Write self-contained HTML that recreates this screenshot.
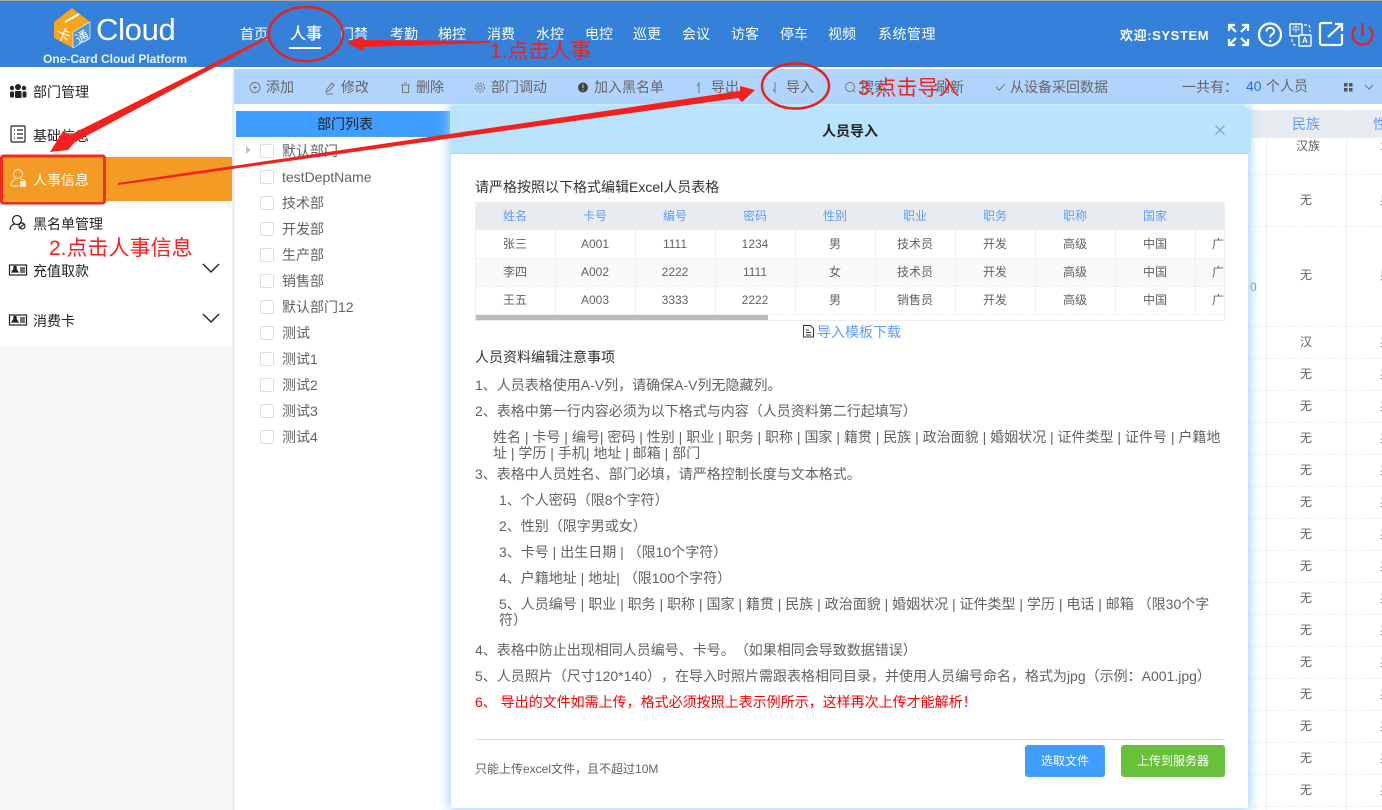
<!DOCTYPE html>
<html lang="zh"><head><meta charset="utf-8"><title>人员导入</title>
<style>
*{box-sizing:border-box}
html,body{margin:0;padding:0;width:1382px;height:810px;overflow:hidden;background:#fff;font-family:"Liberation Sans","Noto Sans CJK SC",sans-serif;font-size:14px;color:#606266;text-spacing-trim:space-all}
.a{position:absolute}
.t{position:absolute;white-space:nowrap;line-height:20px;height:20px}
.c{position:absolute;white-space:nowrap;line-height:20px;height:20px;transform:translateX(-50%)}
.n{color:#fff;top:24px}
.b{color:#666;top:77px}
.s{color:#222;}
.cb{position:absolute;left:260px;width:14px;height:14px;border:1px solid #dcdfe6;border-radius:2px;background:#fff}
.tr{left:282px;color:#606266}
.h{font-size:12px;color:#5c9eff;top:206px}
.r{font-size:12px;color:#606266}
.w{font-size:12px;color:#606266}
.v{position:absolute;width:1px;background:#ebeef5}
.d{position:absolute;height:0;border-top:1px dashed #ebeef5}
svg{position:absolute;overflow:visible}
</style></head><body>
<div class="a" style="left:0;top:0;width:1382px;height:1px;background:#aaa"></div>
<div class="a" style="left:0;top:1px;width:1382px;height:66px;background:#3580d8"></div>
<!-- sidebar -->
<div class="a" style="left:0;top:346px;width:232px;height:464px;background:#f7f7f7"></div>
<div class="a" style="left:232px;top:67px;width:3px;height:743px;background:#eef0f7"></div>
<div class="a" style="left:0;top:157px;width:232px;height:44px;background:#f39b25"></div>
<!-- logo -->
<svg style="left:0;top:0" width="200" height="67">
<polygon points="54,22 72,8 90,22 73,32" fill="#f9a51a"/>
<polygon points="54,22 73,32 73,48 54,38" fill="#f9a51a"/>
<polygon points="73,32 90,22 90,38 73,48" fill="#4c93e0" stroke="#fff" stroke-width=".6"/>
<line x1="65" y1="22" x2="79" y2="14" stroke="#fff" stroke-width="2"/>
<text x="56" y="40" font-size="15" fill="#fff" font-family="Noto Sans CJK SC" transform="rotate(22 63 34)">卡</text>
<text x="75" y="42" font-size="13" fill="#fff" font-family="Noto Sans CJK SC" transform="rotate(-28 81 36)">通</text>
</svg>
<div class="t" style="left:96px;top:10px;height:40px;line-height:40px;font-size:31px;color:#fff;letter-spacing:-.3px">Cloud</div>
<div class="t" style="left:43px;top:49px;font-size:12px;font-weight:bold;color:#e8f2ff">One-Card Cloud Platform</div>
<!-- nav -->
<div class="t n" style="left:240px">首页</div>
<div class="t" style="left:290px;top:25px;font-size:16px;color:#fff;-webkit-text-stroke:.3px #fff">人事</div>
<div class="a" style="left:289px;top:47px;width:32px;height:2px;background:#fff"></div>
<div class="t n" style="left:340px">门禁</div>
<div class="t n" style="left:390px">考勤</div>
<div class="t n" style="left:438px">梯控</div>
<div class="t n" style="left:487px">消费</div>
<div class="t n" style="left:536px">水控</div>
<div class="t n" style="left:585px">电控</div>
<div class="t n" style="left:633px">巡更</div>
<div class="t n" style="left:682px">会议</div>
<div class="t n" style="left:731px">访客</div>
<div class="t n" style="left:780px">停车</div>
<div class="t n" style="left:828px">视频</div>
<div class="t n" style="left:878px;letter-spacing:.5px">系统管理</div>
<div class="t" style="left:1120px;top:26px;font-size:13px;font-weight:bold;color:#fff;letter-spacing:.6px">欢迎:SYSTEM</div>
<!-- header icons -->
<svg style="left:0;top:0" width="1382" height="67" fill="none" stroke="#fff" stroke-width="2.2">
<path d="M1229 31v-6h6M1248 31v-6h-6M1229 39v6h6M1248 39v6h-6M1230 26l6 6M1247 26l-6 6M1230 44l6-6M1247 44l-6-6"/>
<circle cx="1270" cy="34.500" r="11"/>
<path d="M1266.500 31.500c0-5 7.500-5 7.500 0 0 3-3.800 2.800-3.800 6" stroke-width="2"/>
<circle cx="1270.200" cy="41" r=".6" stroke-width="1.400"/>
<rect x="1290" y="24" width="12" height="12" rx="1" stroke-width="1.400"/>
<rect x="1299" y="35" width="12" height="11" rx="1" stroke-width="1.400" fill="#3580d8"/>
<path d="M1304 25h5l1 3v4M1292 39v2l2 4h3" stroke-width="1.200" stroke-dasharray="3 2"/>
<path d="M1342 34v9a2 2 0 0 1-2 2h-18a2 2 0 0 1-2-2v-18a2 2 0 0 1 2-2h10"/>
<path d="M1328 37l14-13M1335 24h7v7"/>
<path d="M1356 27a10 10 0 1 0 13 0M1362.500 23v13" stroke="#e8231d" stroke-width="2.400"/>
</svg>
<div class="t" style="left:1296px;top:24px;width:10px;height:12px;line-height:11px;font-size:8px;color:#fff;transform:translateX(-4px)">中</div>
<div class="t" style="left:1302px;top:35px;height:11px;line-height:11px;font-size:8px;font-weight:bold;color:#fff">A</div>
<!-- sidebar items -->
<svg style="left:0;top:0" width="232" height="346" fill="none" stroke="#222" stroke-width="1.200">
<g fill="#222" stroke="none"><circle cx="18" cy="87" r="3"/><circle cx="12" cy="88" r="2.200"/><circle cx="24" cy="88" r="2.200"/><rect x="15" y="91" width="6.500" height="7" rx="1"/><rect x="10" y="91.500" width="4" height="6" rx="1"/><rect x="22.500" y="91.500" width="4" height="6" rx="1"/></g>
<rect x="11" y="126" width="14" height="16" rx="1"/><path d="M14 130h1M17 130h6M14 134h1M17 134h6M14 138h1M17 138h6"/>
<g stroke="#fbe4c4"><circle cx="18" cy="174" r="4.500"/><path d="M11 186c0-4 2-6 4-7M21 179c2 .5 3 1 4 2M11 186h8"/></g><rect x="20" y="181" width="6" height="6" fill="#fbe4c4" stroke="none"/>
<circle cx="17" cy="220" r="4.500"/><path d="M10 230c0-4 3-6 5-6"/><circle cx="22" cy="226" r="3"/><path d="M20 228l4-4"/>
<rect x="9.500" y="265" width="17" height="10" /><path d="M12 272l2-3h2l2 3z" fill="#222"/><circle cx="15" cy="267.500" r="1.200" fill="#222"/><path d="M20 268h5M20 270h5M20 272h5"/>
<rect x="9.500" y="315" width="17" height="10"/><path d="M12 322l2-3h2l2 3z" fill="#222"/><circle cx="15" cy="317.500" r="1.200" fill="#222"/><path d="M20 318h5M20 320h5M20 322h5"/>
<path d="M203 264l8 8 8-8M203 314l8 8 8-8" stroke-width="1.400"/>
</svg>
<div class="t s" style="left:33px;top:82px">部门管理</div>
<div class="t s" style="left:33px;top:126px">基础信息</div>
<div class="t" style="left:33px;top:170px;color:#fff">人事信息</div>
<div class="t s" style="left:33px;top:214px">黑名单管理</div>
<div class="t s" style="left:33px;top:261px">充值取款</div>
<div class="t s" style="left:33px;top:311px">消费卡</div>
<!-- toolbar -->
<div class="a" style="left:234px;top:69px;width:1148px;height:35px;background:#b1d4fd"></div>
<svg style="left:0;top:0" width="1382" height="110" fill="none" stroke="#777" stroke-width="1">
<circle cx="255" cy="87.500" r="5"/><path d="M253 87.500h4M255 85.500v4"/>
<path d="M326 92l1-3 5-6 2 2-5 6zM326 94h7"/>
<path d="M401 85h9M402.500 85v7.500h6V85M404 83h3"/>
<circle cx="480" cy="87.500" r="2"/><circle cx="480" cy="87.500" r="4.500" stroke-dasharray="2 1"/>
<circle cx="583" cy="87.500" r="5" fill="#444" stroke="none"/><path d="M583 84.500v3.500M583 89.500v1" stroke="#b1d4fd"/>
<path d="M699 93v-10l-2 3"/>
<path d="M775 82v10l-2-3"/>
<circle cx="850" cy="87" r="4.500"/><path d="M853 90l2 2"/>
<path d="M996 87l3 3 6-6"/>
<g fill="#555" stroke="none"><rect x="1344" y="83" width="3.500" height="3.500"/><rect x="1349" y="83" width="3.500" height="3.500"/><rect x="1344" y="88" width="3.500" height="3.500"/><rect x="1349" y="88" width="3.500" height="3.500"/></g>
<path d="M1365 85l4 4 4-4"/>
</svg>
<div class="t b" style="left:266px">添加</div>
<div class="t b" style="left:341px">修改</div>
<div class="t b" style="left:416px">删除</div>
<div class="t b" style="left:491px">部门调动</div>
<div class="t b" style="left:594px">加入黑名单</div>
<div class="t b" style="left:711px">导出</div>
<div class="t b" style="left:786px">导入</div>
<div class="t b" style="left:860px">搜索</div>
<div class="t b" style="left:936px">刷新</div>
<div class="t b" style="left:1010px">从设备采回数据</div>
<div class="t b" style="left:1182px">一共有：</div>
<div class="t" style="left:1246px;top:76px;color:#2b6cf0">40</div>
<div class="t b" style="left:1266px;top:76px">个人员</div>
<!-- tree -->
<div class="a" style="left:236px;top:111px;width:214px;height:26px;background:#409eff"></div>
<div class="c" style="left:345px;top:114px;font-size:14px;color:#222">部门列表</div>
<svg style="left:0;top:0" width="260" height="160"><polygon points="246,146 251,150 246,154" fill="#c0c4cc"/></svg>
<div class="cb" style="top:144px"></div><div class="t tr" style="top:141px">默认部门</div>
<div class="cb" style="top:170px"></div><div class="t tr" style="top:167px">testDeptName</div>
<div class="cb" style="top:196px"></div><div class="t tr" style="top:193px">技术部</div>
<div class="cb" style="top:222px"></div><div class="t tr" style="top:219px">开发部</div>
<div class="cb" style="top:248px"></div><div class="t tr" style="top:245px">生产部</div>
<div class="cb" style="top:274px"></div><div class="t tr" style="top:271px">销售部</div>
<div class="cb" style="top:300px"></div><div class="t tr" style="top:297px">默认部门12</div>
<div class="cb" style="top:326px"></div><div class="t tr" style="top:323px">测试</div>
<div class="cb" style="top:352px"></div><div class="t tr" style="top:349px">测试1</div>
<div class="cb" style="top:378px"></div><div class="t tr" style="top:375px">测试2</div>
<div class="cb" style="top:404px"></div><div class="t tr" style="top:401px">测试3</div>
<div class="cb" style="top:430px"></div><div class="t tr" style="top:427px">测试4</div>
<!-- right table behind -->
<div class="a" style="left:1240px;top:110px;width:142px;height:28px;background:#e8ebf0"></div>
<div class="v" style="left:1266px;top:110px;height:700px"></div>
<div class="v" style="left:1346px;top:110px;height:700px"></div>
<div class="c" style="left:1306px;top:114px;color:#5c9eff">民族</div>
<div class="t" style="left:1373px;top:114px;color:#5c9eff">性别</div>
<div class="c w" style="left:1308px;top:136px">汉族</div><div class="t w" style="left:1380px;top:136px;color:#f56c6c">1</div>
<div class="d" style="left:1248px;top:174px;width:134px"></div>
<div class="d" style="left:1248px;top:226px;width:134px"></div>
<div class="d" style="left:1248px;top:326px;width:134px"></div>
<div class="d" style="left:1248px;top:358px;width:134px"></div>
<div class="d" style="left:1248px;top:390px;width:134px"></div>
<div class="d" style="left:1248px;top:422px;width:134px"></div>
<div class="d" style="left:1248px;top:454px;width:134px"></div>
<div class="d" style="left:1248px;top:486px;width:134px"></div>
<div class="d" style="left:1248px;top:518px;width:134px"></div>
<div class="d" style="left:1248px;top:550px;width:134px"></div>
<div class="d" style="left:1248px;top:582px;width:134px"></div>
<div class="d" style="left:1248px;top:614px;width:134px"></div>
<div class="d" style="left:1248px;top:646px;width:134px"></div>
<div class="d" style="left:1248px;top:678px;width:134px"></div>
<div class="d" style="left:1248px;top:710px;width:134px"></div>
<div class="d" style="left:1248px;top:742px;width:134px"></div>
<div class="d" style="left:1248px;top:774px;width:134px"></div>
<div class="d" style="left:1248px;top:806px;width:134px"></div>
<div class="c w" style="left:1306px;top:190px">无</div><div class="t w" style="left:1380px;top:190px">男</div>
<div class="c w" style="left:1306px;top:265px">无</div><div class="t w" style="left:1380px;top:265px">男</div>
<div class="c w" style="left:1306px;top:332px">汉</div><div class="t w" style="left:1380px;top:332px">男</div>
<div class="c w" style="left:1306px;top:364px">无</div><div class="t w" style="left:1380px;top:364px">男</div>
<div class="c w" style="left:1306px;top:396px">无</div><div class="t w" style="left:1380px;top:396px">男</div>
<div class="c w" style="left:1306px;top:428px">无</div><div class="t w" style="left:1380px;top:428px">男</div>
<div class="c w" style="left:1306px;top:460px">无</div><div class="t w" style="left:1380px;top:460px">男</div>
<div class="c w" style="left:1306px;top:492px">无</div><div class="t w" style="left:1380px;top:492px">男</div>
<div class="c w" style="left:1306px;top:524px">无</div><div class="t w" style="left:1380px;top:524px">男</div>
<div class="c w" style="left:1306px;top:556px">无</div><div class="t w" style="left:1380px;top:556px">男</div>
<div class="c w" style="left:1306px;top:588px">无</div><div class="t w" style="left:1380px;top:588px">男</div>
<div class="c w" style="left:1306px;top:620px">无</div><div class="t w" style="left:1380px;top:620px">男</div>
<div class="c w" style="left:1306px;top:652px">无</div><div class="t w" style="left:1380px;top:652px">男</div>
<div class="c w" style="left:1306px;top:684px">无</div><div class="t w" style="left:1380px;top:684px">男</div>
<div class="c w" style="left:1306px;top:716px">无</div><div class="t w" style="left:1380px;top:716px">男</div>
<div class="c w" style="left:1306px;top:748px">无</div><div class="t w" style="left:1380px;top:748px">男</div>
<div class="c w" style="left:1306px;top:780px">无</div><div class="t w" style="left:1380px;top:780px">男</div>
<div class="t" style="left:1250px;top:277px;font-size:12px;color:#6a8fb5">0</div>
<!-- modal -->
<div class="a" style="left:451px;top:106px;width:797px;height:702px;background:#fff;box-shadow:0 0 10px 2px #9fd4ff"></div>
<div class="a" style="left:451px;top:106px;width:800px;height:47px;background:#bae3fd;border-radius:0 8px 0 0"></div>
<div class="a" style="left:451px;top:153px;width:797px;height:1px;background:#ccc"></div>
<div class="c" style="left:850px;top:121px;font-weight:bold;color:#222">人员导入</div>
<svg style="left:0;top:0" width="1382" height="150"><path d="M1215.500 125.500l9 9M1224.500 125.500l-9 9" stroke="#8a98a6" stroke-width="1.200" fill="none"/></svg>
<div class="t" style="left:475px;top:177px;color:#333">请严格按照以下格式编辑Excel人员表格</div>
<!-- inner table -->
<div class="a" style="left:476px;top:202px;width:749px;height:119px;border:1px solid #ebeef5;border-width:0 1px 1px 0;overflow:hidden">
 <div class="a" style="left:0;top:0;width:750px;height:28px;background:#e8ebf0"></div>
 <div class="a" style="left:0;top:56px;width:750px;height:28px;background:#f9f9f9"></div>
</div>
<div class="v" style="left:475px;top:202px;height:119px"></div>
<div class="d" style="left:476px;top:258px;width:749px"></div>
<div class="d" style="left:476px;top:286px;width:749px"></div>
<div class="d" style="left:476px;top:314px;width:749px"></div>
<div class="v" style="left:555px;top:202px;height:112px"></div>
<div class="v" style="left:635px;top:202px;height:112px"></div>
<div class="v" style="left:715px;top:202px;height:112px"></div>
<div class="v" style="left:795px;top:202px;height:112px"></div>
<div class="v" style="left:875px;top:202px;height:112px"></div>
<div class="v" style="left:955px;top:202px;height:112px"></div>
<div class="v" style="left:1035px;top:202px;height:112px"></div>
<div class="v" style="left:1115px;top:202px;height:112px"></div>
<div class="v" style="left:1195px;top:202px;height:112px"></div>
<div class="a" style="left:476px;top:315px;width:292px;height:5px;background:#bbb"></div>
<div class="c h" style="left:515px">姓名</div><div class="c h" style="left:595px">卡号</div><div class="c h" style="left:675px">编号</div><div class="c h" style="left:755px">密码</div><div class="c h" style="left:835px">性别</div><div class="c h" style="left:915px">职业</div><div class="c h" style="left:995px">职务</div><div class="c h" style="left:1075px">职称</div><div class="c h" style="left:1155px">国家</div>
<div class="c r" style="left:515px;top:234px">张三</div><div class="c r" style="left:595px;top:234px">A001</div><div class="c r" style="left:675px;top:234px">1111</div><div class="c r" style="left:755px;top:234px">1234</div><div class="c r" style="left:835px;top:234px">男</div><div class="c r" style="left:915px;top:234px">技术员</div><div class="c r" style="left:995px;top:234px">开发</div><div class="c r" style="left:1075px;top:234px">高级</div><div class="c r" style="left:1155px;top:234px">中国</div><div class="t r" style="left:1212px;top:234px;width:13px;overflow:hidden">广东</div>
<div class="c r" style="left:515px;top:262px">李四</div><div class="c r" style="left:595px;top:262px">A002</div><div class="c r" style="left:675px;top:262px">2222</div><div class="c r" style="left:755px;top:262px">1111</div><div class="c r" style="left:835px;top:262px">女</div><div class="c r" style="left:915px;top:262px">技术员</div><div class="c r" style="left:995px;top:262px">开发</div><div class="c r" style="left:1075px;top:262px">高级</div><div class="c r" style="left:1155px;top:262px">中国</div><div class="t r" style="left:1212px;top:262px;width:13px;overflow:hidden">广东</div>
<div class="c r" style="left:515px;top:290px">王五</div><div class="c r" style="left:595px;top:290px">A003</div><div class="c r" style="left:675px;top:290px">3333</div><div class="c r" style="left:755px;top:290px">2222</div><div class="c r" style="left:835px;top:290px">男</div><div class="c r" style="left:915px;top:290px">销售员</div><div class="c r" style="left:995px;top:290px">开发</div><div class="c r" style="left:1075px;top:290px">高级</div><div class="c r" style="left:1155px;top:290px">中国</div><div class="t r" style="left:1212px;top:290px;width:13px;overflow:hidden">广东</div>
<svg style="left:0;top:0" width="820" height="340" fill="none" stroke="#333" stroke-width="1"><path d="M803.500 325.500h7l3 3v8.500h-10zM806 330h3M806 332.500h5M806 335h5"/></svg>
<div class="t" style="left:817px;top:322px;font-size:14px;color:#5c9eff">导入模板下载</div>
<div class="t" style="left:475px;top:347px;color:#333">人员资料编辑注意事项</div>
<div class="t" style="left:475px;top:375px">1、人员表格使用A-V列，请确保A-V列无隐藏列。</div>
<div class="t" style="left:475px;top:401px">2、表格中第一行内容必须为以下格式与内容（人员资料第二行起填写）</div>
<div class="t" style="left:493px;top:427px">姓名 | 卡号 | 编号| 密码 | 性别 | 职业 | 职务 | 职称 | 国家 | 籍贯 | 民族 | 政治面貌 | 婚姻状况 | 证件类型 | 证件号 | 户籍地</div>
<div class="t" style="left:493px;top:443px">址 | 学历 | 手机| 地址 | 邮箱 | 部门</div>
<div class="t" style="left:475px;top:464px">3、表格中人员姓名、部门必填，请严格控制长度与文本格式。</div>
<div class="t" style="left:499px;top:490px">1、个人密码（限8个字符）</div>
<div class="t" style="left:499px;top:516px">2、性别（限字男或女）</div>
<div class="t" style="left:499px;top:542px">3、卡号 | 出生日期 | （限10个字符）</div>
<div class="t" style="left:499px;top:568px">4、户籍地址 | 地址| （限100个字符）</div>
<div class="t" style="left:499px;top:594px">5、人员编号 | 职业 | 职务 | 职称 | 国家 | 籍贯 | 民族 | 政治面貌 | 婚姻状况 | 证件类型 | 学历 | 电话 | 邮箱 （限30个字</div>
<div class="t" style="left:499px;top:610px">符）</div>
<div class="t" style="left:475px;top:640px">4、表格中防止出现相同人员编号、卡号。（如果相同会导致数据错误）</div>
<div class="t" style="left:475px;top:666px">5、人员照片（尺寸120*140），在导入时照片需跟表格相同目录，并使用人员编号命名，格式为jpg（示例：A001.jpg）</div>
<div class="t" style="left:475px;top:692px;color:#f00;font-size:14px">6、 导出的文件如需上传，格式必须按照上表示例所示，这样再次上传才能解析！</div>
<div class="a" style="left:476px;top:739px;width:749px;height:1px;background:#ddd"></div>
<div class="t" style="left:475px;top:759px;font-size:12px">只能上传excel文件，且不超过10M</div>
<div class="a" style="left:1025px;top:745px;width:80px;height:32px;background:#409eff;border-radius:3px;color:#fff;font-size:12px;line-height:32px;text-align:center">选取文件</div>
<div class="a" style="left:1121px;top:745px;width:104px;height:32px;background:#67c23a;border-radius:3px;color:#fff;font-size:12px;line-height:32px;text-align:center">上传到服务器</div>
<!-- annotations -->
<svg style="left:0;top:0" width="1382" height="810" fill="none">
<ellipse cx="306" cy="34" rx="37" ry="27" stroke="#e8231d" stroke-width="2.500"/>
<ellipse cx="795.500" cy="86" rx="33.500" ry="22.500" stroke="#e8231d" stroke-width="2.500"/>
<rect x="1.500" y="156" width="103" height="47" rx="2" stroke="#f02a1d" stroke-width="3"/>
<polygon points="490,41 490,43 363,47 363,51 347,43 362,36 362,40" fill="#f5201b"/>
<polygon points="268,36 269,38 75,142 68,150 50,152 63,131 70,135" fill="#f5201b"/>
<polygon points="118,183 118,185 738,98 742,102 755,90 740,86 740,91" fill="#f5201b"/>
</svg>
<div class="t" style="left:490px;top:39px;height:26px;line-height:26px;font-size:21px;color:#f5201b">1.点击人事</div>
<div class="t" style="left:49px;top:236px;height:26px;line-height:26px;font-size:21px;color:#f5201b">2.点击人事信息</div>
<div class="t" style="left:858px;top:76px;height:26px;line-height:26px;font-size:21px;color:#f5201b">3.点击导入</div>
</body></html>
